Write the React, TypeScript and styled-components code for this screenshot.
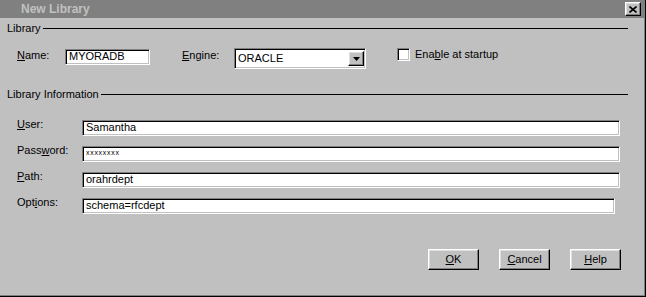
import React from "react";
import styled, { createGlobalStyle } from "styled-components";

const GlobalStyle = createGlobalStyle`
    html, body {
        margin: 0;
        padding: 0;
        background: #c0c0c0;
    }
    body {
        font-family: "Liberation Sans", Arial, sans-serif;
        font-size: 11px;
        color: #000;
    }
`

const Window = styled.div`
    width: 646px;
    height: 297px;
    box-sizing: border-box;
    padding: 0 2px 2px 0;
    background: #c0c0c0;
    display: flex;
    flex-direction: column;
    box-shadow: inset -1px -1px #000, inset -2px -2px #808080;
`

const TitleBar = styled.div`
    height: 18px;
    background: #808080;
    display: flex;
    align-items: flex-start;
    padding-left: 21px;
`

const Title = styled.div`
    font-size: 12px;
    font-weight: bold;
    line-height: 18px;
    color: #c0c0c0;
`

const raised = `
    box-sizing: border-box;
    background: #c0c0c0;
    border: 1px solid;
    border-color: #fff #000 #000 #fff;
    box-shadow: inset -1px -1px #808080, inset 1px 1px #dfdfdf;
`

const sunken = `
    box-sizing: border-box;
    background: #fff;
    border: 1px solid;
    border-color: #808080 #fff #fff #808080;
    box-shadow: inset 1px 1px #000, inset -1px -1px #c0c0c0;
`

const CloseButton = styled.div`
    ${raised}
    width: 16px;
    height: 14px;
    margin: 2px 3px 0 auto;
    display: flex;
    align-items: center;
    justify-content: center;
`

const GroupHeader = styled.div<{ $top: number }>`
    display: flex;
    align-items: center;
    gap: 2px;
    height: 13px;
    line-height: 13px;
    margin: ${p => p.$top}px 16px 0 7px;

    &::after {
        content: "";
        flex: 1;
        height: 1px;
        background: #000;
    }
`

const TopRow = styled.div`
    display: flex;
    align-items: flex-start;
    height: 21px;
    margin-top: 13px;
    padding-left: 17px;
`

const Label = styled.div<{ $width: number; $left?: number; $top?: number }>`
    flex-shrink: 0;
    width: ${p => p.$width}px;
    margin-left: ${p => p.$left ?? 0}px;
    margin-top: ${p => p.$top ?? 1}px;
    line-height: 13px;
`

const Field = styled.div<{ $width: number; $top?: number }>`
    ${sunken}
    width: ${p => p.$width}px;
    height: 16px;
    margin-top: ${p => p.$top ?? 0}px;
    padding: 0 3px;
    line-height: 13px;
    white-space: nowrap;
`

const Masked = styled.span`
    font-size: 7px;
    letter-spacing: 0.7px;
    vertical-align: top;
    line-height: 11px;
`

const Combo = styled.div`
    ${sunken}
    width: 132px;
    height: 21px;
    display: flex;
    align-items: center;
    padding: 0 1px 0 3px;
`

const ComboText = styled.div`
    flex: 1;
    line-height: 13px;
`

const DropButton = styled.div`
    ${raised}
    width: 16px;
    height: 15px;
    display: flex;
    align-items: center;
    justify-content: center;
`

const CheckBox = styled.div`
    ${sunken}
    width: 13px;
    height: 13px;
    margin-left: 31px;
`

const CheckLabel = styled.div`
    margin-left: 5px;
    line-height: 13px;
`

const InfoRows = styled.div`
    display: flex;
    flex-direction: column;
    gap: 10px;
    margin-top: 19px;
    padding-left: 17px;
`

const InfoRow = styled.div`
    display: flex;
    align-items: flex-start;
`

const Footer = styled.div`
    display: flex;
    justify-content: flex-end;
    gap: 20px;
    margin-top: 35px;
    padding-right: 23px;
`

const Button = styled.button`
    ${raised}
    width: 51px;
    height: 21px;
    padding: 0;
    font-family: inherit;
    font-size: 11px;
    color: #000;
    line-height: 13px;
`

const infoFields = [
    { label: <><u>U</u>ser:</>, value: "Samantha", width: 538 },
    { label: <>Pass<u>w</u>ord:</>, value: null, width: 538 },
    { label: <><u>P</u>ath:</>, value: "orahrdept", width: 538 },
    { label: <>Opt<u>i</u>ons:</>, value: "schema=rfcdept", width: 533 },
];

const App = () => {
    return (
        <>
            <GlobalStyle />
            <Window>
                <TitleBar>
                    <Title>New Library</Title>
                    <CloseButton>
                        <svg width="8" height="7" viewBox="0 0 8 7">
                            <path d="M0.5 0.5 L7.5 6.5 M7.5 0.5 L0.5 6.5" stroke="#000" strokeWidth="1.6" />
                        </svg>
                    </CloseButton>
                </TitleBar>

                <GroupHeader $top={4}>Library</GroupHeader>
                <TopRow>
                    <Label $width={48}><u>N</u>ame:</Label>
                    <Field $width={85} $top={1}>MYORADB</Field>
                    <Label $width={52} $left={32}><u>E</u>ngine:</Label>
                    <Combo>
                        <ComboText>ORACLE</ComboText>
                        <DropButton>
                            <svg width="7" height="4" viewBox="0 0 7 4">
                                <path d="M0 0 H7 L3.5 4 Z" fill="#000" />
                            </svg>
                        </DropButton>
                    </Combo>
                    <CheckBox />
                    <CheckLabel>Ena<u>b</u>le at startup</CheckLabel>
                </TopRow>

                <GroupHeader $top={19}>Library Information</GroupHeader>
                <InfoRows>
                    {infoFields.map((f, i) => (
                        <InfoRow key={i}>
                            <Label $width={65} $top={-2}>{f.label}</Label>
                            <Field $width={f.width}>
                                {f.value ?? <Masked>xxxxxxxx</Masked>}
                            </Field>
                        </InfoRow>
                    ))}
                </InfoRows>

                <Footer>
                    <Button><u>O</u>K</Button>
                    <Button><u>C</u>ancel</Button>
                    <Button><u>H</u>elp</Button>
                </Footer>
            </Window>
        </>
    )
};

export default App;
